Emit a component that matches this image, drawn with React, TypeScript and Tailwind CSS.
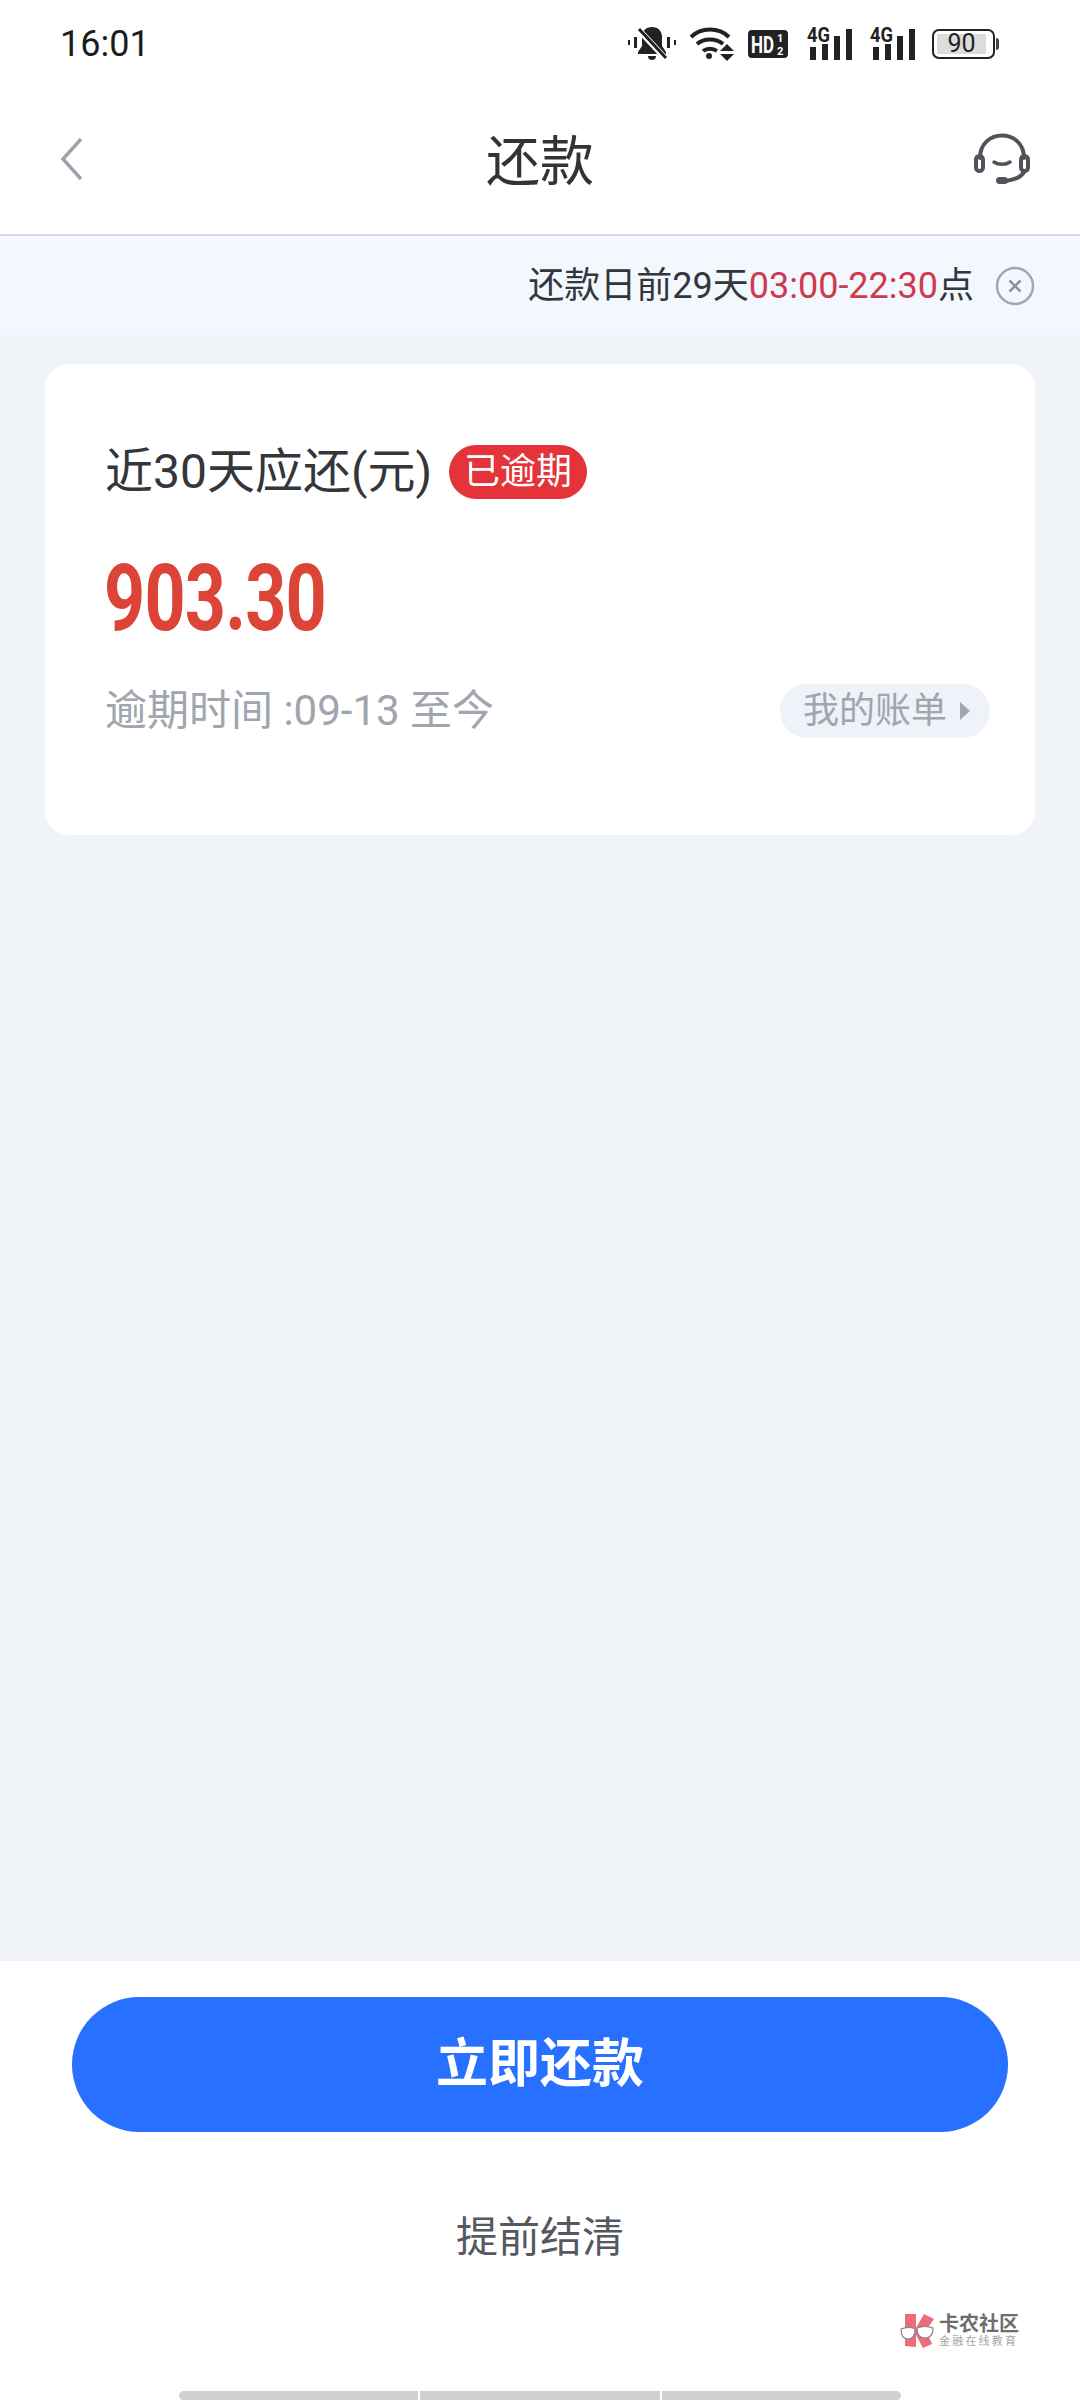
const font = { fontFamily: 'Roboto, "Noto Sans CJK SC", sans-serif' };

function BellOff() {
  return (
    <svg width="48" height="34" viewBox="0 0 48 34" fill="#222">
      <rect x="0" y="13" width="2" height="5" />
      <rect x="6" y="10" width="3" height="11" />
      <rect x="39" y="10" width="3" height="11" />
      <rect x="46" y="13" width="2" height="5" />
      <path d="M24 0c6 0 10 4 10 10v9l4 6v2H10v-2l4-6v-9c0-6 4-10 10-10z" />
      <path d="M20 29h8a4 4 0 0 1-8 0z" />
      <path d="M11 3 37 31" stroke="#fff" strokeWidth="6" />
      <path d="M11 2 38 31" stroke="#222" strokeWidth="3" />
    </svg>
  );
}

function Wifi() {
  return (
    <svg width="46" height="34" viewBox="0 0 46 34" fill="none" stroke="#222" strokeWidth="4">
      <path d="M2 10C12 0 30 0 40 10" />
      <path d="M8 17c7-6 19-6 26 0" />
      <path d="M14 24c4-3 10-3 14 0" />
      <circle cx="20" cy="29" r="3" fill="#222" stroke="none" />
      <path d="M38 17l7 7H31z" fill="#222" stroke="none" />
      <path d="M31 27h14l-7 7z" fill="#222" stroke="none" />
    </svg>
  );
}

function HdBadge() {
  return (
    <svg width="40" height="28" viewBox="0 0 40 28">
      <rect width="40" height="28" rx="4" fill="#222" />
      <text x="3" y="23" fontSize="24" fontWeight="700" fill="#fff" fontFamily="Roboto" textLength="23" lengthAdjust="spacingAndGlyphs">HD</text>
      <text x="29" y="12" fontSize="11" fontWeight="700" fill="#fff" fontFamily="Roboto">1</text>
      <text x="29" y="25" fontSize="11" fontWeight="700" fill="#fff" fontFamily="Roboto">2</text>
    </svg>
  );
}

function Signal() {
  return (
    <svg width="46" height="33" viewBox="0 0 46 33" fill="#222" className="overflow-visible">
      <text x="0" y="15" fontSize="20" fontWeight="700" fontFamily="Roboto" textLength="23" lengthAdjust="spacingAndGlyphs">4G</text>
      <rect x="3" y="20" width="6" height="13" />
      <rect x="15" y="17" width="6" height="16" />
      <rect x="27" y="9" width="6" height="24" />
      <rect x="39" y="2" width="6" height="31" />
    </svg>
  );
}

function Battery() {
  return (
    <div className="flex items-center">
      <div className="w-[63px] h-[30px] rounded-[7px] border-2 border-[#222] p-[3px]">
        <div className="w-[49px] h-full bg-[#dcdcdc] flex items-center justify-center text-[25px] leading-none text-[#222]">90</div>
      </div>
      <div className="w-[3px] h-[12px] bg-[#444] ml-[1px] rounded-r-sm" />
    </div>
  );
}

function Headset() {
  return (
    <svg width="56" height="54" viewBox="0 0 56 54" fill="none" stroke="#4f545c" strokeWidth="4" strokeLinecap="round">
      <path d="M6 26C6 -4 50 -4 50 26" />
      <rect x="2" y="24" width="7" height="15" rx="3.5" />
      <rect x="47" y="24" width="7" height="15" rx="3.5" />
      <path d="M20 30c4 3 12 3 16 0" strokeWidth="3.5" />
      <path d="M50 40c-3 6-10 8-20 9" />
      <rect x="22" y="45" width="12" height="7" rx="3.5" fill="#4f545c" stroke="none" />
    </svg>
  );
}

function CloseCircle() {
  return (
    <svg width="40" height="40" viewBox="0 0 40 40" fill="none" stroke="#a3a8b0">
      <circle cx="20" cy="20" r="18" strokeWidth="2.5" />
      <path d="M14.5 14.5l11 11M25.5 14.5l-11 11" strokeWidth="2.5" stroke="#8d929a" />
    </svg>
  );
}

function Watermark() {
  return (
    <div className="absolute left-[900px] top-[352px] flex items-start gap-[3px]">
      <svg width="36" height="36" viewBox="0 0 36 36">
        <path d="M5 1h11v14l8-14 10 5-8 11 6 14-9 4-7-13v12L5 33z" fill="#ee6b78" />
        <path d="M1 16c5-2 10-2 14 0 0 7-2 10-7 10-5 0-7-4-7-10z" fill="#fff" stroke="#888" strokeWidth="1.2" />
        <path d="M17 15c5-2 11-2 16 0 0 7-3 10-8 10s-8-3-8-10z" fill="#fff" stroke="#888" strokeWidth="1.2" />
      </svg>
      <div className="flex flex-col">
        <span className="text-[20px] leading-[22px] font-bold text-[#6e6e6e]">卡农社区</span>
        <span className="text-[11px] leading-[13px] tracking-[2.2px] text-[#a5a5a5]">金融在线教育</span>
      </div>
    </div>
  );
}

export default function App() {
  return (
    <div className="w-[1080px] h-[2400px] flex flex-col bg-white overflow-hidden" style={font}>
      <div className="h-[84px] shrink-0 flex items-center justify-between pl-[60px] pr-[81px] pt-[3px]">
        <span className="text-[36px] leading-none text-[#1c1c1c]">16:01</span>
        <div className="flex items-center gap-[13px]">
          <BellOff />
          <Wifi />
          <HdBadge />
          <div className="flex items-center gap-[17px] ml-[6px]">
            <Signal />
            <Signal />
          </div>
          <div className="ml-[3px]">
            <Battery />
          </div>
        </div>
      </div>

      <div className="h-[152px] shrink-0 border-b-2 border-[#d8dce2] grid grid-cols-[1fr_auto_1fr] items-center px-[50px]">
        <svg width="24" height="44" viewBox="0 0 24 44" fill="none" stroke="#9ea2aa" strokeWidth="3.5" className="ml-[10px]">
          <path d="M21 2 3 22l18 20" />
        </svg>
        <span className="text-[54px] leading-none text-[#333] mt-[7px]">还款</span>
        <div className="flex justify-end">
          <Headset />
        </div>
      </div>

      <div className="h-[99px] shrink-0 bg-[#f2f8fd] flex items-center justify-end gap-[21px] pr-[45px]">
        <span className="text-[36px] leading-none text-[#33363b]">
          还款日前29天<span className="text-[#cf3a4e]">03:00-22:30</span>点
        </span>
        <CloseCircle />
      </div>

      <div className="flex-1 bg-[#f0f4f9] px-[45px] pt-[29px]">
        <div className="h-[471px] bg-white rounded-[24px] pl-[60px] pr-[45px] pt-[81px]">
          <div className="flex items-center gap-[17px] h-[54px]">
            <span className="text-[48px] leading-none text-[#33363b]">近30天应还(元)</span>
            <span className="h-[54px] w-[138px] rounded-full bg-[#e5333a] text-white text-[36px] leading-none flex items-center justify-center">已逾期</span>
          </div>
          <div className="mt-[54px] h-[92px] flex items-center">
            <span className="text-[92px] leading-none font-bold text-[#dc4437] tracking-[-1px] origin-left scale-x-[0.78] -ml-[1px]">903.30</span>
          </div>
          <div className="mt-[39px] flex items-center justify-between">
            <span className="text-[42px] leading-none text-[#a0a5ae]">逾期时间 :09-13 至今</span>
            <div className="h-[54px] w-[210px] rounded-full bg-[#eff2f8] flex items-center pl-[23px] gap-[13px]">
              <span className="text-[36px] leading-none text-[#a0a5ae]">我的账单</span>
              <svg width="10" height="18" viewBox="0 0 10 18" fill="#a0a5ae">
                <path d="M0 0l10 9-10 9z" />
              </svg>
            </div>
          </div>
        </div>
      </div>

      <div className="relative h-[439px] shrink-0 bg-white flex flex-col items-center">
        <button className="mt-[36px] w-[936px] h-[135px] rounded-full bg-[#2870ff] text-white text-[52px] leading-none font-bold">
          立即还款
        </button>
        <span className="mt-[85px] text-[42px] leading-none text-[#55585f]">提前结清</span>
        <Watermark />
        <div className="mt-auto flex gap-[2px] w-[722px] h-[9px] rounded-t-[4px] overflow-hidden">
          <div className="flex-1 bg-[#d0d0d0] rounded-l-[6px]" />
          <div className="flex-1 bg-[#d0d0d0]" />
          <div className="flex-1 bg-[#d0d0d0] rounded-r-[6px]" />
        </div>
      </div>
    </div>
  );
}
